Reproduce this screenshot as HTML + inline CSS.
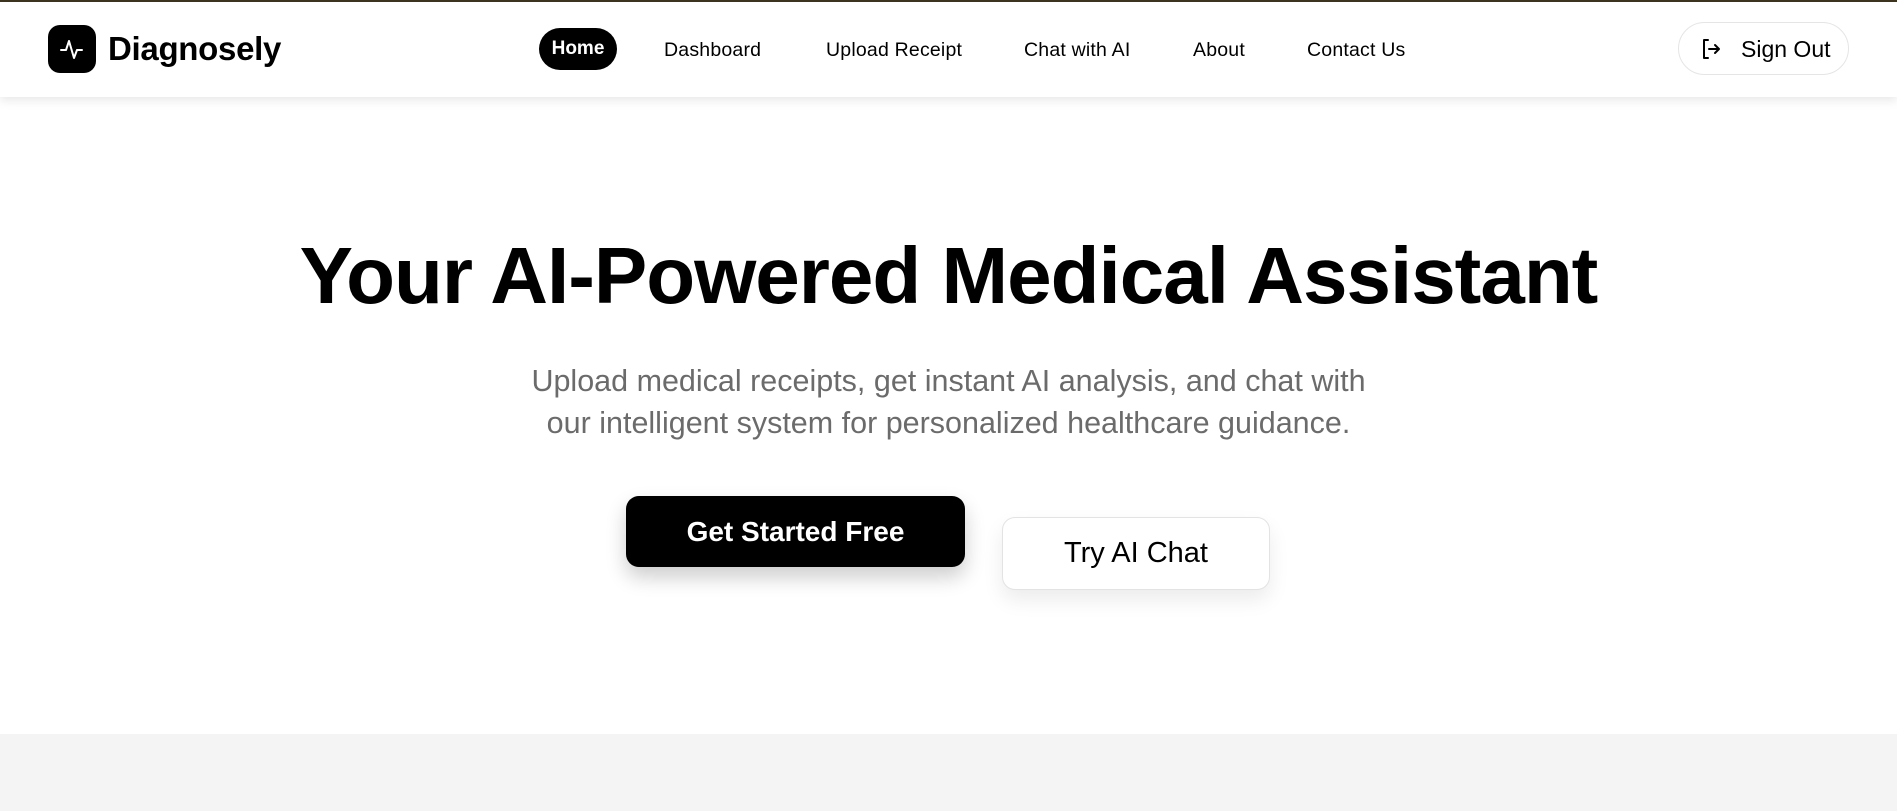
<!DOCTYPE html>
<html><head><style>
*{margin:0;padding:0;box-sizing:border-box}
body{width:1897px;height:811px;overflow:hidden;background:#fff;font-family:"Liberation Sans",sans-serif;color:#000;position:relative}
.top{position:absolute;left:0;top:0;width:100%;height:2px;background:#3d3520}
header{position:absolute;left:0;top:2px;width:100%;height:95px;background:#fff;box-shadow:0 3px 10px rgba(0,0,0,.1);z-index:2}
.logo{position:absolute;left:48px;top:23px;width:48px;height:48px;background:#000;border-radius:12px}
.brand{position:absolute;left:108px;top:28px;font-size:33px;font-weight:bold;letter-spacing:-0.3px}
.nav a{position:absolute;top:37px;font-size:19.5px;letter-spacing:0.2px;color:#000;text-decoration:none}
.home{position:absolute;left:539px;top:26px;width:78px;height:42px;background:#000;border-radius:21px;color:#fff;font-size:19px;font-weight:bold;text-align:center;line-height:42px}
.so{position:absolute;left:1678px;top:20px;width:171px;height:53px;border:1px solid #e5e5e5;border-radius:27px}
.so span{position:absolute;left:62px;top:13px;font-size:23px}
h1{position:absolute;left:0;width:100%;top:230px;text-align:center;font-size:80px;font-weight:bold;letter-spacing:-1px}
.sub{position:absolute;left:0;width:100%;top:360px;text-align:center;font-size:30.5px;line-height:42px;color:#6b6b6b}
.b1{position:absolute;left:626px;top:496px;width:339px;height:71px;background:#000;border-radius:13px;color:#fff;font-size:28px;font-weight:bold;text-align:center;line-height:71px;box-shadow:0 10px 20px rgba(0,0,0,.2)}
.b2{position:absolute;left:1002px;top:517px;width:268px;height:73px;background:#fff;border:1px solid #e3e3e3;border-radius:13px;font-size:29px;text-align:center;line-height:71px;box-shadow:0 10px 20px rgba(0,0,0,.08)}
.gray{position:absolute;left:0;top:734px;width:100%;height:77px;background:#f4f4f4}
</style></head><body>
<div class="top"></div>
<header>
<div class="logo"><svg width="48" height="48" viewBox="0 0 48 48"><path d="M13 25h5l3-9 5 17 3-8h5" fill="none" stroke="#fff" stroke-width="2" stroke-linejoin="round" stroke-linecap="round"/></svg></div>
<div class="brand">Diagnosely</div>
<div class="home">Home</div>
<div class="nav"><a style="left:664px">Dashboard</a><a style="left:826px">Upload Receipt</a><a style="left:1024px">Chat with AI</a><a style="left:1193px">About</a><a style="left:1307px">Contact Us</a></div>
<div class="so"><svg style="position:absolute;left:20px;top:14px" width="24" height="24" viewBox="0 0 24 24" fill="none" stroke="#000" stroke-width="2" stroke-linecap="round" stroke-linejoin="round"><path d="M9 3H5v18h4M10 12h10M16 8l4 4-4 4"/></svg><span>Sign Out</span></div>
</header>
<h1>Your AI-Powered Medical Assistant</h1>
<div class="sub">Upload medical receipts, get instant AI analysis, and chat with<br>our intelligent system for personalized healthcare guidance.</div>
<div class="b1">Get Started Free</div>
<div class="b2">Try AI Chat</div>
<div class="gray"></div>
</body></html>
